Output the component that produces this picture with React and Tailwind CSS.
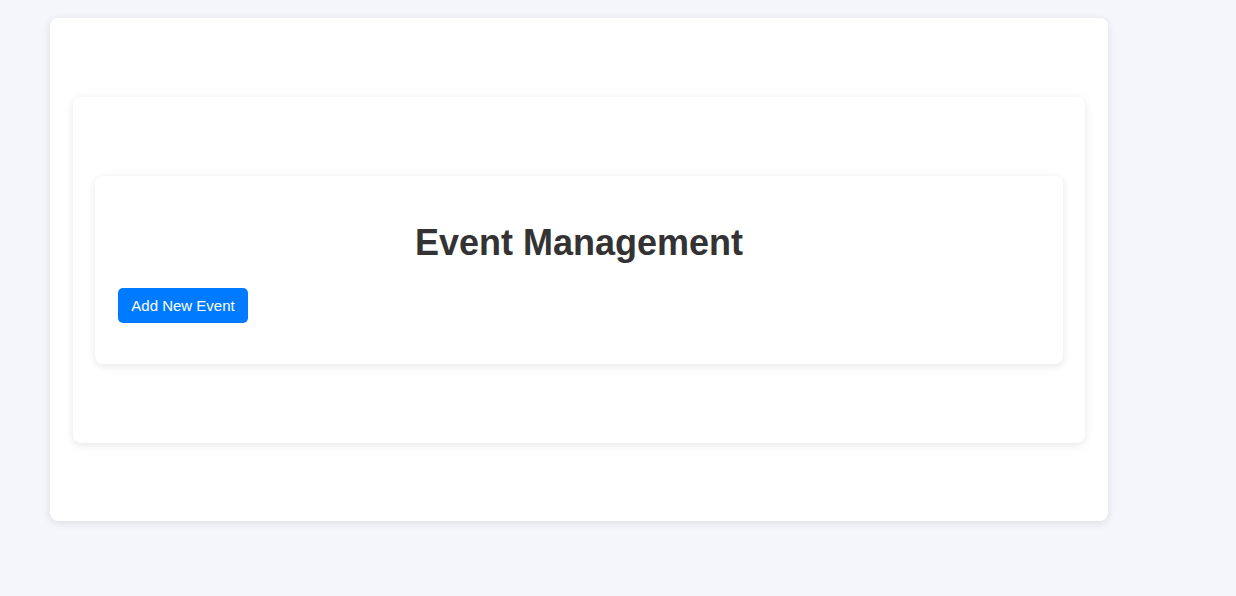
import React from 'react';

export default function App() {
  return (
    <div className="min-h-[596px] w-full bg-[#f4f6fb] pt-[18px] pl-[50px]" style={{ fontFamily: '"Liberation Sans", Arial, sans-serif' }}>
      {/* outer card */}
      <div className="w-[1058px] rounded-lg bg-white px-[23px] pt-[79px] pb-[78px] shadow-[0_2px_8px_rgba(0,0,0,0.1)]">
        {/* middle card */}
        <div className="rounded-lg bg-white px-[22px] py-[79px] shadow-[0_2px_8px_rgba(0,0,0,0.1)]">
          {/* inner card */}
          <div className="rounded-lg bg-white px-[23px] pt-[24px] pb-[41px] shadow-[0_2px_8px_rgba(0,0,0,0.1)]">
            <h1 className="mt-[24px] mb-[27px] text-center text-[36px] leading-[37px] font-bold text-[#333]">
              Event Management
            </h1>
            <button className="h-[35px] w-[130px] rounded-[5px] bg-[#007bff] pt-[2px] text-[15px] text-white">
              Add New Event
            </button>
          </div>
        </div>
      </div>
    </div>
  );
}
